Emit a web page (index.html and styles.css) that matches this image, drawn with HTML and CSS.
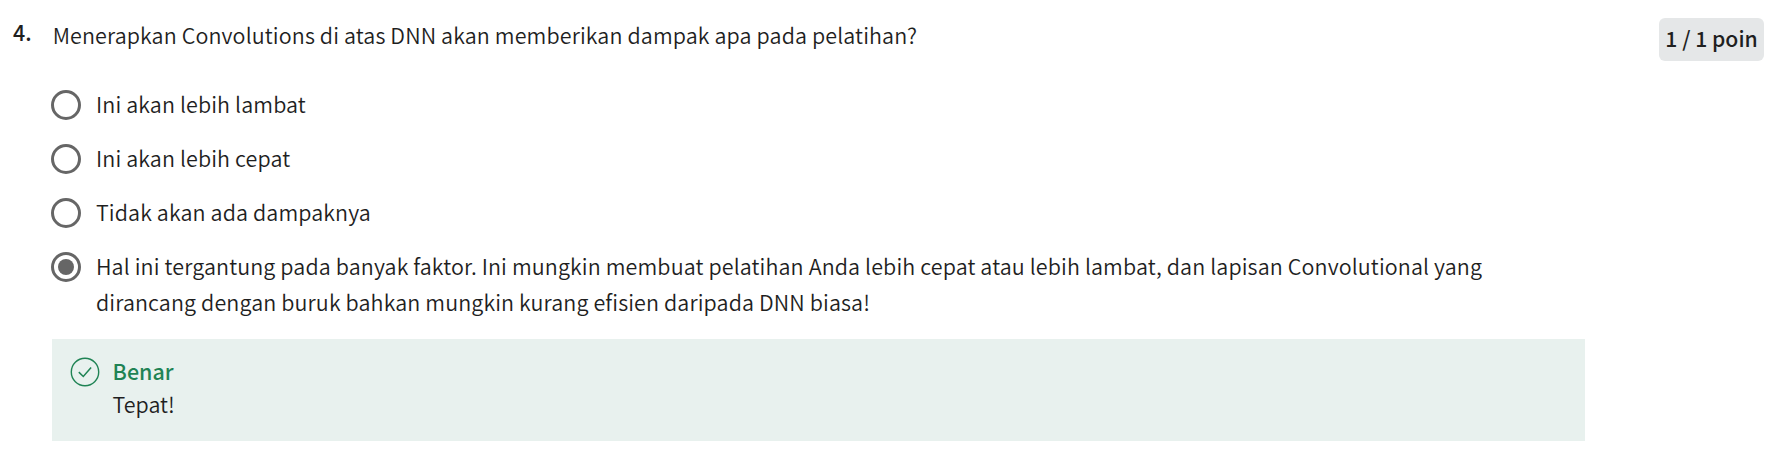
FILE: index.html
```html
<!DOCTYPE html>
<html lang="id">
<head>
<meta charset="utf-8">
<title>Kuis</title>
<link rel="stylesheet" href="styles.css">
</head>
<body>
<main class="question">
  <div class="number">4.</div>
  <div class="content">
    <p class="prompt">Menerapkan Convolutions di atas DNN akan memberikan dampak apa pada pelatihan?</p>
    <div class="options">
      <div class="option"><span class="radio"></span><span class="label">Ini akan lebih lambat</span></div>
      <div class="option"><span class="radio"></span><span class="label">Ini akan lebih cepat</span></div>
      <div class="option"><span class="radio"></span><span class="label">Tidak akan ada dampaknya</span></div>
      <div class="option"><span class="radio checked"></span><span class="label">Hal ini tergantung pada banyak faktor. Ini mungkin membuat pelatihan Anda lebih cepat atau lebih lambat, dan lapisan Convolutional yang<br>dirancang dengan buruk bahkan mungkin kurang efisien daripada DNN biasa!</span></div>
    </div>
    <div class="feedback">
      <svg class="check" viewBox="0 0 30 30" width="30" height="30" fill="none" stroke="#1f8354">
        <circle cx="15" cy="15" r="13.7" stroke-width="1.4"/>
        <path d="M8.8 15.1l4.5 4.4 7.8-9" stroke-width="1.5"/>
      </svg>
      <div class="message">
        <div class="verdict">Benar</div>
        <div class="detail">Tepat!</div>
      </div>
    </div>
  </div>
  <div class="points">1 / 1 poin</div>
</main>
</body>
</html>
```

FILE: styles.css
```css
* { box-sizing: border-box; }
body {
  margin: 0;
  background: #fff;
  color: #1f1f1f;
  font-family: "Noto Sans CJK SC", "Noto Sans", sans-serif;
  font-size: 21.48px;
  font-weight: 350;
  line-height: 36px;
}
.question {
  display: grid;
  grid-template-columns: 52px 1533px auto;
  height: 456px;
}
.number {
  padding: 14px 0 0 13px;
  font-weight: 500;
}
.content { padding-top: 17px; }
.prompt,
.label { letter-spacing: 0.118px; }
.prompt { margin: 0; height: 60px; padding-left: 0.7px; }
.options {
  display: flex;
  flex-direction: column;
  gap: 18px;
  padding-top: 9px;
  margin-left: -1.4px;
}
.option {
  display: flex;
  gap: 15.4px;
}
.radio {
  flex: none;
  display: flex;
  align-items: center;
  justify-content: center;
  width: 30px;
  height: 30px;
  margin-top: 4px;
  border: 3px solid #666;
  border-radius: 50%;
}
.checked::after {
  content: "";
  width: 16px;
  height: 16px;
  border-radius: 50%;
  background: #666;
}
.label { white-space: nowrap; }
.feedback {
  display: flex;
  gap: 12.6px;
  height: 102px;
  margin-top: 19px;
  padding: 15px 18px;
  background: #e8f1ee;
}
.check { margin-top: 3px; }
.message { line-height: 33px; }
.verdict {
  color: #1f8354;
  font-weight: 500;
}
.points {
  justify-self: end;
  width: 105px;
  height: 43px;
  margin: 18px 5px 0 0;
  border-radius: 6px;
  background: #e5e7e8;
  text-align: center;
  font-size: 21.2px;
  font-weight: 500;
  line-height: 40px;
  white-space: nowrap;
}
```
